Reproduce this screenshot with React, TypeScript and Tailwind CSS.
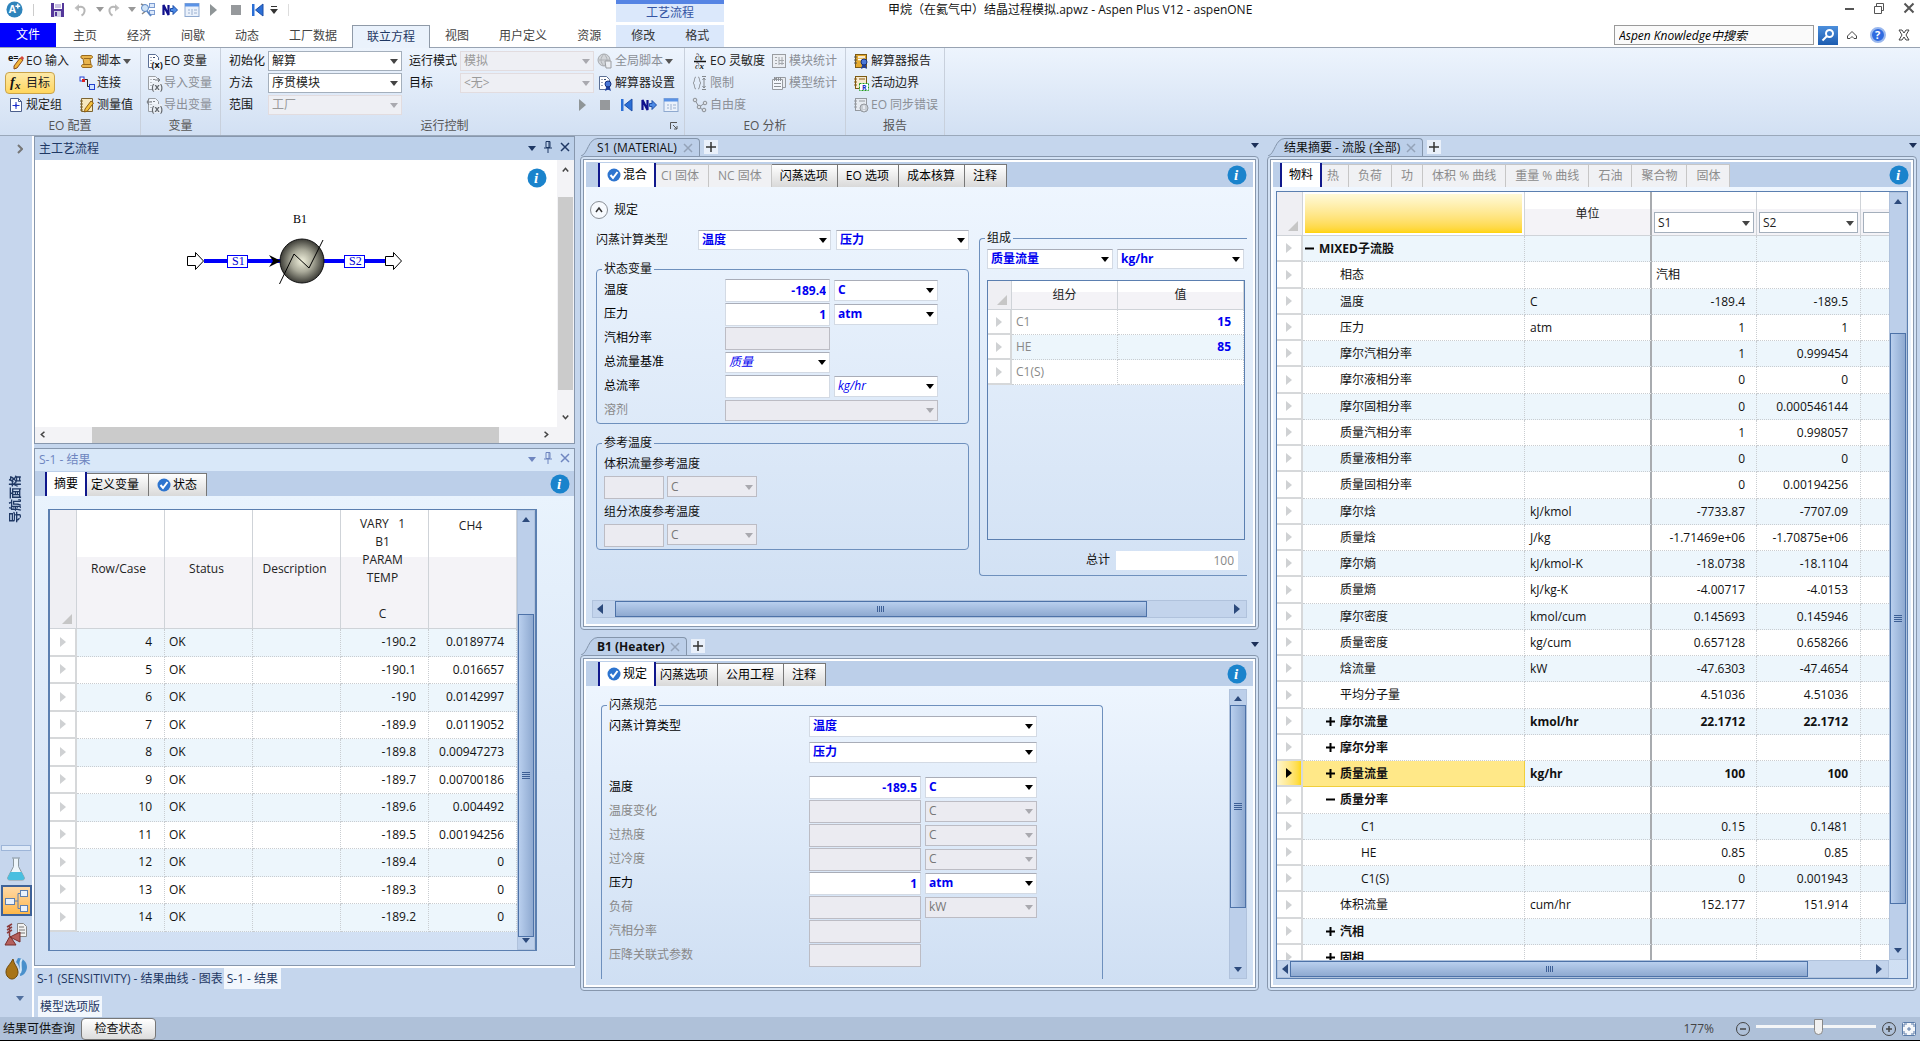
import React, { useId } from "react";

type Kids = { children?: React.ReactNode };

/* ---------- small drawings ---------- */

function Ico({ children, dim }: Kids & { dim?: boolean }) {
  return (
    <svg viewBox="0 0 16 16" className={dim ? "size-4 shrink-0 overflow-visible opacity-60 grayscale" : "size-4 shrink-0 overflow-visible"} fill="none" aria-hidden="true">
      {children}
    </svg>
  );
}

const Tri = ({ className = "" }: { className?: string }) => (
  <svg viewBox="0 0 8 5" className={"h-[5px] w-[8px] shrink-0 " + className} aria-hidden="true">
    <path d="M0 0h8L4 5z" fill="currentColor" />
  </svg>
);

const DocSheet = () => <path d="M2.5 1.5h7l3 3v10h-10z" fill="#fff" stroke="#5b6f95" />;
const Rows = () => <path d="M4.5 4.5h1M7 4.5h2M4.5 7.5h1M4.5 10.5h1" stroke="#3a4b70" />;

const IcoEo = () => (
  <Ico>
    <text x="0" y="8" fontSize="9" fontWeight="700" fill="#111" fontFamily="Open Sans">e=</text>
    <path d="M6 13l6-8 3 2-6 8-3 1z" fill="#f2b63c" stroke="#8a4b1a" />
    <path d="M12 5l3 2 1-2-2-2z" fill="#d8453a" />
  </Ico>
);
const IcoFx = () => (
  <Ico>
    <text x="2" y="12" fontSize="14" fontStyle="italic" fontWeight="700" fill="#111" fontFamily="Liberation Serif">f</text>
    <text x="7" y="14" fontSize="11" fontStyle="italic" fontWeight="700" fill="#111" fontFamily="Liberation Serif">x</text>
  </Ico>
);
const IcoSpec = () => (
  <Ico>
    <path d="M2.5 1.5h8l3 3v10h-11z" fill="#fff" stroke="#4c5f8c" />
    <path d="M13.5 4.5h-3v-3" stroke="#4c5f8c" />
    <path d="M8 5v7M4.5 8.5h7" stroke="#2233cc" />
    <path d="M8 7l1.5 1.5L8 10 6.500 8.500z" fill="#2233cc" />
  </Ico>
);
const IcoScript = () => (
  <Ico>
    <path d="M3 2.500h9c2 0 2 3 0 3h-1l1 6c1 0 2 3 0 3H4c-2 0-2-3 0-3h1l-1-6H3c-1.500 0-1.500-3 0-3z" fill="#e9b44c" stroke="#9a6a1c" />
    <path d="M5 5.500h7M5 11.500h7" stroke="#9a6a1c" />
  </Ico>
);
const IcoLink = () => (
  <Ico>
    <path d="M5 4.500h3.500v7H11" stroke="#222" />
    <rect x="1" y="2" width="4" height="4" fill="#fff" stroke="#2040d0" />
    <rect x="3" y="4" width="3" height="3" fill="#d22" />
    <rect x="10.500" y="9.500" width="5" height="5" fill="#cfe0ff" stroke="#2040d0" />
  </Ico>
);
const IcoMeasure = () => (
  <Ico>
    <path d="M2.500 1.500h11v13h-11z" fill="#f6e7bd" stroke="#7c6431" />
    <path d="M1 4h3M1 7h3M1 10h3M1 13h3" stroke="#7c6431" />
    <path d="M6 12l6-8 2.500 2-6 8-3 1z" fill="#f5c13a" stroke="#8a5a13" />
  </Ico>
);
const IcoVar = ({ dim, mark }: { dim?: boolean; mark?: "in" | "out" }) => (
  <Ico dim={dim}>
    <DocSheet />
    <Rows />
    <rect x="6" y="7" width="10" height="9" fill="#eef4fd" />
    <text x="5.500" y="14.500" fontSize="9" fontWeight="700" fill="#111" fontFamily="Open Sans">(x)</text>
    {mark === "in" && <path d="M9 5h5M12 3l2 2-2 2" stroke="#333" />}
    {mark === "out" && <path d="M1 5h5M3 2l-2 3 2 3" stroke="#333" />}
  </Ico>
);
const Rosette = () => (
  <g>
    <path d="M9.500 11l-1.500 5 3-1.500 3 1.500-1.500-5z" fill="#1f3f9c" />
    <circle cx="11" cy="9" r="3" fill="#4b78d8" stroke="#16307c" />
  </g>
);
const IcoGlobal = () => (
  <Ico dim>
    <circle cx="7" cy="7" r="6" fill="#c4c4c4" stroke="#777" />
    <path d="M2 7h10M7 1c-4 4-4 8 0 12M7 1c4 4 4 8 0 12" stroke="#888" />
    <path d="M8 8h6v7H9z" fill="#eee" stroke="#666" />
  </Ico>
);
const IcoSolver = () => (
  <Ico>
    <DocSheet />
    <Rows />
    <Rosette />
  </Ico>
);
const IcoPartial = () => (
  <Ico>
    <text x="3" y="7" fontSize="9" fontStyle="italic" fontWeight="700" fill="#111" fontFamily="Liberation Serif">∂y</text>
    <path d="M2 8.500h12" stroke="#111" strokeWidth="1.500" />
    <text x="3" y="16" fontSize="9" fontStyle="italic" fontWeight="700" fill="#111" fontFamily="Liberation Serif">∂x</text>
  </Ico>
);
const IcoLimit = () => (
  <Ico dim>
    <path d="M4 2c-2 0-1 5-3 6 2 1 1 6 3 6M6 2c2 0 1 5 3 6-2 1-1 6-3 6M12 3v10M10.500 5L12 3l1.500 2M10.500 11l1.500 2 1.500-2M10 1.500h4M10 14.500h4" stroke="#444" />
  </Ico>
);
const IcoTree = () => (
  <Ico dim>
    <path d="M3 3l4 7 6-4M7 10l4 3" stroke="#555" />
    <circle cx="3" cy="3" r="1.800" fill="#ddd" stroke="#555" />
    <circle cx="13" cy="6" r="1.800" fill="#ddd" stroke="#555" />
    <circle cx="12" cy="13" r="1.800" fill="#ddd" stroke="#555" />
    <circle cx="7" cy="10" r="1.800" fill="#ddd" stroke="#555" />
  </Ico>
);
const IcoStat = () => (
  <Ico dim>
    <rect x="1.500" y="1.500" width="13" height="13" fill="#eee" stroke="#666" />
    <path d="M4 4.500h2M4 7.500h2M4 10.500h2M8 4v8M11 4v8M8 7.500h5M8 10.500h5" stroke="#777" />
  </Ico>
);
const IcoStat2 = () => (
  <Ico dim>
    <path d="M4.500 2.500h10v10h-10z" fill="#eee" stroke="#666" />
    <path d="M1.500 4.500h10v10h-10z" fill="#fff" stroke="#666" />
    <path d="M3.500 2v4M5.500 2v4M7.500 2v4M9.500 2v4M3 8.500h7M3 11.500h7" stroke="#555" />
  </Ico>
);
const IcoReport = () => (
  <Ico>
    <rect x="2.500" y="1.500" width="11" height="13" fill="#e3a92f" stroke="#7c5a14" />
    <path d="M5 4h7M5 6.500h7" stroke="#fff" strokeWidth="1.500" />
    <path d="M1 4h3M1 7h3M1 10h3" stroke="#555" />
    <Rosette />
  </Ico>
);
const IcoBound = () => (
  <Ico>
    <rect x="2.500" y="1.500" width="11" height="12" fill="#f7ead0" stroke="#7c5a14" />
    <path d="M1 4h3M1 7h3M1 10h3M6 4h6" stroke="#8a5a13" />
    <rect x="6.500" y="8.500" width="9" height="7" fill="#fff" stroke="#1d9a1d" strokeDasharray="2 1" />
    <text x="9" y="15" fontSize="7" fontWeight="700" fill="#1430c8" fontFamily="Open Sans">R</text>
  </Ico>
);
const IcoSync = () => (
  <Ico dim>
    <rect x="2.500" y="1.500" width="11" height="12" fill="#eee" stroke="#666" />
    <path d="M1 4h3M1 7h3M1 10h3M6 4h6" stroke="#666" />
    <circle cx="11" cy="11" r="4" fill="#bbb" stroke="#666" />
    <path d="M11 8.500v3.500M11 13v1" stroke="#fff" strokeWidth="1.500" />
  </Ico>
);
const IcoSave = () => (
  <Ico>
    <path d="M1 1h13v14H1z" fill="#54379a" />
    <rect x="4" y="1" width="8" height="6" fill="#fff" />
    <path d="M5 3h6M5 5h6" stroke="#8f7fc4" />
    <rect x="4" y="9" width="7" height="6" fill="#cfcfe6" />
    <rect x="5" y="10" width="2" height="4" fill="#54379a" />
  </Ico>
);
const IcoUndo = () => (
  <Ico dim>
    <path d="M7 2L2.500 6 7 9.500z" fill="#999" />
    <path d="M5 6c5-3 9 0 7 5-.5 1.500-1.500 2-2.500 2.500" stroke="#888" strokeWidth="2" />
  </Ico>
);
const IcoRedo = () => (
  <Ico dim>
    <path d="M9 2l4.500 4L9 9.500z" fill="#999" />
    <path d="M11 6C6 3 2 6 4 11c.5 1.500 1.500 2 2.500 2.500" stroke="#888" strokeWidth="2" />
  </Ico>
);
const IcoFlow = () => (
  <Ico>
    <path d="M1 2l6 3M2 12l5-4" stroke="#888" strokeWidth="1.500" />
    <rect x="9.500" y="1.500" width="5" height="4" fill="#dce9fb" stroke="#7b9bd0" />
    <rect x="9.500" y="8.500" width="5" height="4" fill="#dce9fb" stroke="#7b9bd0" />
    <circle cx="5" cy="6" r="3.500" fill="#cfe3f7" stroke="#5a86c4" />
    <path d="M7 9l4 5" stroke="#5a86c4" strokeWidth="2" />
  </Ico>
);
const IcoNext = () => (
  <Ico>
    <path d="M1.500 13V3l5 10V3" stroke="#10108c" strokeWidth="2.200" />
    <path d="M8.500 6.500H11v-3L15.500 8 11 12.500v-3H8.500z" fill="#4c8ae6" stroke="#1c4ea8" />
  </Ico>
);
const IcoPanel = () => (
  <Ico>
    <rect x="1" y="1.500" width="14" height="13" fill="#eaf1fb" stroke="#8fa9cf" />
    <path d="M1 1.500h14v3H1z" fill="#5b93e6" />
    <path d="M4 8h2M8 7v6M10 8h3M4 11h2M10 11h3" stroke="#9bb0cf" />
  </Ico>
);
const IcoPlay = () => (
  <Ico>
    <path d="M4 2l7 6-7 6z" fill="#8f9597" />
  </Ico>
);
const IcoStop = () => (
  <Ico>
    <rect x="3" y="3" width="10" height="10" fill="#96999c" />
  </Ico>
);
const IcoFirst = () => (
  <Ico>
    <path d="M2 2h2.500v12H2z" fill="#2b6fd6" />
    <path d="M13 2v12L5.500 8z" fill="#2b6fd6" stroke="#1c4ea8" />
  </Ico>
);
const Check = () => (
  <svg viewBox="0 0 14 14" className="size-3.5 shrink-0" aria-hidden="true">
    <circle cx="7" cy="7" r="6.500" fill="#2d74cf" />
    <path d="M3.500 7l2.500 3 4.500-6" fill="none" stroke="#fff" strokeWidth="2" />
  </svg>
);
const Info = () => (
  <button type="button" aria-label="信息" className="size-5 shrink-0">
    <svg viewBox="0 0 20 20" className="size-5" aria-hidden="true">
      <circle cx="10" cy="10" r="9.500" fill="#1a83cc" />
      <text x="7" y="15" fontSize="15" fontStyle="italic" fontWeight="700" fill="#fff" fontFamily="Liberation Serif">i</text>
    </svg>
  </button>
);

/* ---------- controls ---------- */

type SelProps = { id?: string; label?: string; value?: string; look?: "blue" | "italic" | "plain" | "off" | "faint"; className?: string };

function Sel({ id, label, value = "", look = "blue", className = "" }: SelProps) {
  const looks = {
    blue: "border-[#d3dae4] border-t-[#a9adb8] bg-white font-bold text-[#0000f0]",
    italic: "border-[#d3dae4] border-t-[#a9adb8] bg-white italic text-[#0000f0]",
    plain: "border-[#a4afbc] bg-white text-[#222]",
    off: "border-[#bcbcc4] bg-[#ebebf1] text-[#777]",
    faint: "border-[#e2dcdf] bg-[#eeeff4] text-[#9a9a9a]",
  };
  const off = look === "off" || look === "faint";
  return (
    <span className={"relative block shrink-0 " + className}>
      <select
        id={id}
        aria-label={label}
        defaultValue={value}
        disabled={off}
        className={"block h-full w-full appearance-none rounded-none border pr-4 pl-[3px] leading-4 opacity-100 outline-none " + looks[look]}
      >
        <option>{value}</option>
      </select>
      <Tri className={"pointer-events-none absolute top-1/2 right-1 -mt-0.5 w-[7px] " + (off ? "text-[#a9a9af]" : look === "plain" ? "text-[#444]" : "text-black")} />
    </span>
  );
}

function Box({ id, value = "", off, className = "" }: { id?: string; value?: string; off?: boolean; className?: string }) {
  return (
    <input
      id={id}
      defaultValue={value}
      disabled={off}
      className={
        "h-[23px] shrink-0 border px-[3px] text-right font-bold text-[#0000f0] outline-none " +
        (off ? "border-[#bcbcc4] bg-[#ebebf1] " : "border-[#d3dae4] border-t-[#a9adb8] bg-white ") +
        className
      }
    />
  );
}

function RBtn({ icon, children, dim, on, arrow }: Kids & { icon: React.ReactNode; dim?: boolean; on?: boolean; arrow?: boolean }) {
  return (
    <button
      type="button"
      disabled={dim}
      className={
        "flex h-[22px] items-center gap-0.5 self-start rounded-sm border px-[2px] whitespace-nowrap " +
        (on ? "border-[#c9a34a] bg-gradient-to-b from-[#fde9a6] to-[#ffd65c] pr-[4px] " : "border-transparent ") +
        (dim ? "text-[#8b8f96]" : "text-[#222]")
      }
    >
      {icon}
      {children}
      {arrow && <Tri className="h-1 w-1.5 text-[#555]" />}
    </button>
  );
}

function Group({ name, className = "", nameClass = "", children, launcher }: Kids & { name: string; className?: string; nameClass?: string; launcher?: boolean }) {
  return (
    <section aria-label={name} className={"flex shrink-0 flex-col border-r border-[#c8d0dc] pt-[2px] " + className}>
      <div className="flex h-[66px]">{children}</div>
      <div className={"relative flex-1 text-center leading-[19px] text-[#555] " + nameClass}>
        {name}
        {launcher && (
          <svg viewBox="0 0 8 8" className="absolute top-1.5 right-1.5 size-2" fill="none" stroke="#555" aria-hidden="true">
            <path d="M.5 7V.5H7M3 3l4 4M7 4v3H4" />
          </svg>
        )}
      </div>
    </section>
  );
}

type Tab = { t: string; s?: "on" | "ok" | "off"; check?: boolean };

function FormTabs({ tabs, className = "", infoClass = "mr-[6px]" }: { tabs: Tab[]; className?: string; infoClass?: string }) {
  return (
    <div className={"flex h-[25px] shrink-0 items-end bg-[#bccfe9] pt-px " + className}>
      {tabs.map(({ t, s = "ok", check }) => (
        <button
          key={t}
          type="button"
          disabled={s === "off"}
          className={
            "flex items-center gap-0.5 whitespace-nowrap " +
            (s === "on"
              ? "relative z-10 -mr-1 h-6 border-x-2 border-[#10188c] bg-white px-[7px] text-black"
              : s === "ok"
                ? "h-[23px] border border-b-0 border-l-0 border-[#777] bg-gradient-to-b from-white to-[#d9d9d9] pr-[9px] pl-2 text-black"
                : "h-[23px] border border-b-0 border-l-0 border-[#c6c6c6] bg-[#f0f1f4] px-[9px] text-[#8c8c8c]")
          }
        >
          {check && <Check />}
          {t}
        </button>
      ))}
      <span className={"ml-auto flex h-full items-center " + infoClass}>
        <Info />
      </span>
    </div>
  );
}

function HBar({ a, b, c }: { a: number; b: number; c: number }) {
  return (
    <div className="flex h-[18px] min-w-0 flex-1 items-center border border-[#b0c2dc] bg-[#c3d4ec] text-[#2c4a7c]">
      <svg viewBox="0 0 6 10" className="ml-1 h-2.5 w-1.5 shrink-0" aria-hidden="true"><path d="M6 0v10L0 5z" fill="currentColor" /></svg>
      <span style={{ flexGrow: a }} />
      <span style={{ flexGrow: b }} className="flex h-4 items-center justify-center gap-px border border-[#4d72a8] bg-gradient-to-b from-[#b9cfee] to-[#8ea9d0]">
        {[0, 1, 2, 3].map((i) => <i key={i} className="h-1.5 w-px bg-[#3d5f96]" />)}
      </span>
      <span style={{ flexGrow: c }} />
      <svg viewBox="0 0 6 10" className="mr-1.5 h-2.5 w-1.5 shrink-0" aria-hidden="true"><path d="M0 0v10l6-5z" fill="currentColor" /></svg>
    </div>
  );
}

function VBar({ a, b, c, className = "" }: { a: number; b: number; c: number; className?: string }) {
  return (
    <div className={"flex w-[18px] shrink-0 flex-col items-center border border-[#b0c2dc] bg-[#bccfea] text-[#2c4a7c] " + className}>
      <Tri className="mt-1.5 w-2.5 rotate-180" />
      <span style={{ flexGrow: a }} />
      <span style={{ flexGrow: b }} className="flex w-4 flex-col items-center justify-center gap-px border border-[#4d72a8] bg-gradient-to-r from-[#b9cfee] to-[#8ea9d0]">
        {[0, 1, 2, 3].map((i) => <i key={i} className="h-px w-2 bg-[#3d5f96]" />)}
      </span>
      <span style={{ flexGrow: c }} />
      <Tri className="mb-1.5 w-2.5" />
    </div>
  );
}

function DocFrame({ title, bold, children, grow }: Kids & { title: string; bold?: boolean; grow: number }) {
  return (
    <section aria-label={title} className="flex min-h-0 basis-0 flex-col" style={{ flexGrow: grow }}>
      <div className="flex h-5 shrink-0 items-end text-[#111]">
        <svg viewBox="0 0 18 18" className="-mr-px h-[18px] w-[18px] shrink-0" aria-hidden="true">
          <path d="M1 18C8 16 8 .5 18 .5V18z" fill="#bccfe9" />
          <path d="M1 18C8 16 8 .5 18 .5" fill="none" stroke="#8495ab" />
        </svg>
        <div className="flex h-[18px] items-center gap-1.5 rounded-tr border-t border-r border-[#8495ab] bg-[#bccfe9] pr-1.5">
          <span className={bold ? "font-bold whitespace-nowrap" : "whitespace-nowrap"}>{title}</span>
          <button type="button" aria-label="关闭标签" className="text-[#94a3b8]">
            <svg viewBox="0 0 10 10" className="size-2.5" stroke="currentColor" strokeWidth="1.500" aria-hidden="true"><path d="M1 1l8 8M9 1l-8 8" /></svg>
          </button>
        </div>
        <button type="button" aria-label="新建标签" className="mb-0.5 ml-1 flex size-3.5 items-center justify-center bg-[#e9f0fa]">
          <svg viewBox="0 0 12 12" className="size-3" stroke="#333" strokeWidth="1.500" aria-hidden="true"><path d="M6 1v10M1 6h10" /></svg>
        </button>
        <button type="button" aria-label="标签列表" className="mb-2 ml-auto text-[#1b2f58]"><Tri /></button>
      </div>
      <div className="flex min-h-0 flex-1 rounded-sm border border-[#8797ad] bg-[#d3e2f5] p-0.5">
        <div className="flex min-h-0 min-w-0 flex-1 border border-[#8797ad] bg-white p-0.5">
          <div className="flex min-h-0 min-w-0 flex-1 flex-col bg-gradient-to-b from-[#f0f7ff] to-[#cfdff3]">{children}</div>
        </div>
      </div>
    </section>
  );
}

function PanelTitle({ text, faded }: { text: string; faded?: boolean }) {
  return (
    <div className={"flex shrink-0 items-center pr-1 pl-1 " + (faded ? "h-[22px] bg-[#d9e8f9] text-[#6f86c0]" : "h-[23px] bg-[#bcd0ea] text-[#1f3864]")}>
      <h2 className="flex-1">{text}</h2>
      <button type="button" aria-label="选项" className="mr-2"><Tri /></button>
      <button type="button" aria-label="固定" className="mr-2">
        <svg viewBox="0 0 8 12" className="mb-1 h-3 w-2" fill="none" stroke="currentColor" aria-hidden="true"><path d="M2 .5h4v6H2zM0 7h8M4 7v5M5 1v5" /></svg>
      </button>
      <button type="button" aria-label="关闭" className="mb-1">
        <svg viewBox="0 0 10 10" className="size-2.5" stroke="currentColor" strokeWidth="1.500" aria-hidden="true"><path d="M1 1l8 8M9 1l-8 8" /></svg>
      </button>
    </div>
  );
}

const RowHead = ({ on }: { on?: boolean }) => (
  <th className={"border-2 border-t-0 border-l-0 border-[#d6d8da] p-0 " + (on ? "bg-gradient-to-r from-[#fff6cc] to-[#ffd800]" : "bg-white")}>
    <svg viewBox="0 0 6 10" className="mx-auto h-2.5 w-1.5" aria-hidden="true"><path d="M0 0l6 5-6 5z" fill={on ? "#000" : "#cfd1d3"} /></svg>
  </th>
);
const Corner = () => (
  <th aria-label="全选" className="border-r border-b border-[#cfd3d8] bg-[#efeff3] p-0 align-bottom">
    <svg viewBox="0 0 10 10" className="mr-1 mb-1 ml-auto size-2.5" aria-hidden="true"><path d="M10 0v10H0z" fill="#c6c6c6" /></svg>
  </th>
);

/* ---------- ribbon ---------- */

function TitleArea() {
  const tabs = ["主页", "经济", "间歇", "动态", "工厂数据", "联立方程", "视图", "用户定义", "资源"];
  return (
    <header className="shrink-0 bg-white">
      <div className="flex h-[25px]">
        <div className="flex w-[616px] shrink-0 items-center pb-1.5 pl-[6px]">
          <svg viewBox="0 0 18 18" className="size-[17px]" aria-label="Aspen Plus" role="img">
            <circle cx="9" cy="9" r="8.500" fill="#2f84bb" />
            <text x="3" y="13" fontSize="11" fontWeight="700" fill="#fff" fontFamily="Open Sans">A</text>
            <path d="M12.500 3v5M10 5.500h5" stroke="#fff" strokeWidth="1.500" />
          </svg>
          <i className="mr-4 ml-2.5 h-3 w-px bg-[#ccc]" />
          <button type="button" aria-label="保存"><IcoSave /></button>
          <button type="button" aria-label="撤消" className="ml-1.5"><IcoUndo /></button>
          <Tri className="mr-0.5 ml-2 h-1 w-1.5 text-[#999]" />
          <button type="button" aria-label="恢复"><IcoRedo /></button>
          <Tri className="mr-1 ml-1.5 h-1 w-1.5 text-[#999]" />
          <span className="flex gap-1.5">
            <button type="button" aria-label="查找"><IcoFlow /></button>
            <button type="button" aria-label="下一步"><IcoNext /></button>
            <button type="button" aria-label="控制面板"><IcoPanel /></button>
            <button type="button" aria-label="运行"><IcoPlay /></button>
            <button type="button" aria-label="停止"><IcoStop /></button>
            <button type="button" aria-label="重置"><IcoFirst /></button>
          </span>
          <span className="ml-1 flex flex-col items-center gap-0.5 text-[#333]"><i className="h-px w-1.5 bg-[#333]" /><Tri className="h-1 w-1.5" /></span>
          <i className="ml-2.5 h-3 w-px bg-[#ddd]" />
        </div>
        <div className="mb-[3px] w-[108px] shrink-0 border-t-4 border-[#5584e4] bg-[#dbe8fb] text-center leading-[17px] text-[#3455a4]">工艺流程</div>
        <h1 className="min-w-0 flex-1 truncate pl-41 leading-5 text-[#111]">甲烷（在氦气中）结晶过程模拟.apwz - Aspen Plus V12 - aspenONE</h1>
        <div className="flex items-start gap-[18px] pt-0.5 pr-[5px] text-[#555]">
          <button type="button" aria-label="最小化"><svg viewBox="0 0 12 12" className="size-3" stroke="currentColor" strokeWidth="2" aria-hidden="true"><path d="M2 7h9" /></svg></button>
          <button type="button" aria-label="还原"><svg viewBox="0 0 12 12" className="size-3" fill="none" stroke="currentColor" aria-hidden="true"><path d="M1.500 4.500h7v7h-7zM3.500 4V1.500h7v7H9" /></svg></button>
          <button type="button" aria-label="关闭窗口"><svg viewBox="0 0 12 12" className="size-3" stroke="currentColor" strokeWidth="2" aria-hidden="true"><path d="M1.500 1.500l9 9M10.500 1.500l-9 9" /></svg></button>
        </div>
      </div>
      <div className="flex h-[23px] items-stretch border-b border-[#98a3b2]">
        <button type="button" className="-mt-0.5 mr-0.5 w-14 bg-[#0000fe] text-white">文件</button>
        {tabs.map((t) => (
          <button
            key={t}
            type="button"
            className={
              "whitespace-nowrap " +
              (t === "联立方程" ? "-mb-px border border-b-0 border-[#8f9aa8] bg-[#eaf2fc] px-[14px] text-[#1f3864]" : "px-[15px] text-[#444]")
            }
          >
            {t}
          </button>
        ))}
        <div className="flex bg-[#dbe8fb] text-[#333]">
          <button type="button" className="px-[15px]">修改</button>
          <button type="button" className="px-[15px]">格式</button>
        </div>
        <div className="ml-auto flex items-center gap-1 pr-2.5 pb-0.5">
          <input aria-label="搜索" defaultValue="Aspen Knowledge中搜索" className="h-5 w-[200px] border border-[#9a9a9a] bg-[#fafafa] px-1 text-black italic outline-none" />
          <button type="button" aria-label="开始搜索" className="flex h-[19px] w-5 items-center justify-center bg-gradient-to-b from-[#4c8fdc] to-[#1c5cb0]">
            <svg viewBox="0 0 14 14" className="size-3.5" fill="none" stroke="#fff" strokeWidth="2" aria-hidden="true"><circle cx="8.500" cy="5.500" r="3.500" /><path d="M6 8l-4.500 4.500" /></svg>
          </button>
          <button type="button" aria-label="折叠功能区" className="ml-1">
            <svg viewBox="0 0 12 12" className="size-3" fill="#fff" stroke="#444" aria-hidden="true"><path d="M1.500 9.500V7L6 2.500 10.500 7v2.500H8L6 7.500 4 9.500z" /></svg>
          </button>
          <button type="button" aria-label="帮助" className="ml-2">
            <svg viewBox="0 0 16 16" className="size-4" aria-hidden="true"><circle cx="8" cy="8" r="7" fill="#2f6be0" stroke="#9ab8ee" strokeWidth="2" /><text x="5" y="12" fontSize="11" fontWeight="700" fill="#fff" fontFamily="Open Sans">?</text></svg>
          </button>
          <button type="button" aria-label="关闭文档" className="ml-2">
            <svg viewBox="0 0 12 12" className="size-3" fill="#fff" stroke="#444" aria-hidden="true"><path d="M1 1h3l2 3 2-3h3L8 6l3 5H8L6 8l-2 3H1l3-5z" /></svg>
          </button>
        </div>
      </div>
    </header>
  );
}

function RibbonBar() {
  const id = useId();
  return (
    <div className="flex h-[88px] shrink-0 border-b border-[#9aa8ba] bg-gradient-to-b from-[#edf4fd] to-[#d2e0f3]">
      <Group name="EO 配置" className="w-[141px]">
        <div className="ml-[5px] flex w-[71px] flex-col">
          <RBtn icon={<IcoEo />}>EO 输入</RBtn>
          <RBtn icon={<IcoFx />} on>目标</RBtn>
          <RBtn icon={<IcoSpec />}>规定组</RBtn>
        </div>
        <div className="flex flex-col">
          <RBtn icon={<IcoScript />} arrow>脚本</RBtn>
          <RBtn icon={<IcoLink />}>连接</RBtn>
          <RBtn icon={<IcoMeasure />}>测量值</RBtn>
        </div>
      </Group>
      <Group name="变量" className="w-[80px]">
        <div className="ml-0.5 flex flex-col">
          <RBtn icon={<IcoVar />}>EO 变量</RBtn>
          <RBtn icon={<IcoVar dim mark="in" />} dim>导入变量</RBtn>
          <RBtn icon={<IcoVar dim mark="out" />} dim>导出变量</RBtn>
        </div>
      </Group>
      <Group name="运行控制" className="w-[464px]" nameClass="pr-4" launcher>
        <div className="flex flex-col pl-2">
          <div className="flex h-[22px] items-center">
            <label htmlFor={id + "a"} className="w-[39px]">初始化</label>
            <Sel id={id + "a"} value="解算" look="plain" className="h-5 w-[134px]" />
            <label htmlFor={id + "b"} className="ml-[7px] w-[51px]">运行模式</label>
            <Sel id={id + "b"} value="模拟" look="faint" className="h-5 w-[134px]" />
            <RBtn icon={<IcoGlobal />} dim arrow>全局脚本</RBtn>
          </div>
          <div className="flex h-[22px] items-center">
            <label htmlFor={id + "c"} className="w-[39px]">方法</label>
            <Sel id={id + "c"} value="序贯模块" look="plain" className="h-5 w-[134px]" />
            <label htmlFor={id + "d"} className="ml-[7px] w-[51px]">目标</label>
            <Sel id={id + "d"} value="<无>" look="faint" className="h-5 w-[134px]" />
            <RBtn icon={<IcoSolver />}>解算器设置</RBtn>
          </div>
          <div className="flex h-[22px] items-center">
            <label htmlFor={id + "e"} className="w-[39px]">范围</label>
            <Sel id={id + "e"} value="工厂" look="faint" className="h-5 w-[134px]" />
            <span className="ml-[173px] flex gap-1.5">
              <button type="button" aria-label="运行"><IcoPlay /></button>
              <button type="button" aria-label="停止"><IcoStop /></button>
              <button type="button" aria-label="重置"><IcoFirst /></button>
              <button type="button" aria-label="下一步"><IcoNext /></button>
              <button type="button" aria-label="控制面板"><IcoPanel /></button>
            </span>
          </div>
        </div>
      </Group>
      <Group name="EO 分析" className="w-[161px]">
        <div className="ml-[4px] flex w-[79px] flex-col">
          <RBtn icon={<IcoPartial />}>EO 灵敏度</RBtn>
          <RBtn icon={<IcoLimit />} dim>限制</RBtn>
          <RBtn icon={<IcoTree />} dim>自由度</RBtn>
        </div>
        <div className="flex flex-col">
          <RBtn icon={<IcoStat />} dim>模块统计</RBtn>
          <RBtn icon={<IcoStat2 />} dim>模型统计</RBtn>
        </div>
      </Group>
      <Group name="报告" className="w-[99px]">
        <div className="ml-[4px] flex flex-col">
          <RBtn icon={<IcoReport />}>解算器报告</RBtn>
          <RBtn icon={<IcoBound />}>活动边界</RBtn>
          <RBtn icon={<IcoSync />} dim>EO 同步错误</RBtn>
        </div>
      </Group>
    </div>
  );
}

/* ---------- left side ---------- */

function NavStrip() {
  return (
    <nav aria-label="导航" className="flex w-[34px] shrink-0 flex-col items-center border-r-2 border-white bg-[#c6d6ed]">
      <button type="button" aria-label="展开" className="mt-2 ml-2">
        <svg viewBox="0 0 6 10" className="h-2.5 w-1.5" fill="none" stroke="#777" strokeWidth="2" aria-hidden="true"><path d="M1 1l4 4-4 4" /></svg>
      </button>
      <div className="flex flex-1 items-center">
        <span className="rotate-180 font-bold text-[#1f3864] [text-orientation:sideways] [writing-mode:vertical-rl]">导航面格</span>
      </div>
      <i className="h-1.5 w-[30px] border border-[#9db5d8] bg-[#dfeaf8]" />
      <button type="button" aria-label="物性" className="mt-1.5">
        <svg viewBox="0 0 24 24" className="size-6" aria-hidden="true">
          <path d="M8 1h8M9.500 1.500v8L4 20c-1 2 0 3 2 3h12c2 0 3-1 2-3L14.500 9.500v-8" fill="#eef6fb" stroke="#8a979e" />
          <path d="M6.500 15h11l2.500 5c1 2 0 3-2 3H6c-2 0-3-1-2-3z" fill="#49bfe0" />
        </svg>
      </button>
      <button type="button" aria-label="模拟" className="mt-1 flex size-[31px] items-center justify-center border-2 border-[#3f6298] bg-gradient-to-b from-[#ffd8a4] to-[#ffb847]">
        <svg viewBox="0 0 26 26" className="size-[26px]" fill="#eaf2fd" stroke="#5d7fb0" aria-hidden="true">
          <path d="M11 13h4M19 5.500h-4v15h4" fill="none" />
          <rect x="2.500" y="10.500" width="9" height="6" /><rect x="17.500" y="2.500" width="7" height="6" /><rect x="17.500" y="17.500" width="7" height="6" />
        </svg>
      </button>
      <button type="button" aria-label="安全性分析" className="mt-1.5">
        <svg viewBox="0 0 24 24" className="size-6" aria-hidden="true">
          <path d="M13.500 1.500h6l3 3v10h-9z" fill="#f2f2f2" stroke="#888" />
          <path d="M15 5h5M15 8h6M15 11h6" stroke="#777" />
          <path d="M3 5l5-3M3 8l5-3M3 11l5-3M5.500 3v11" stroke="#8b3b3b" strokeWidth="1.500" />
          <path d="M6 14l-5 9h11zM6 15l10-5v10z" fill="#b5605c" stroke="#7a2f2c" />
        </svg>
      </button>
      <button type="button" aria-label="能量分析" className="mt-2.5">
        <svg viewBox="0 0 24 24" className="size-6" aria-hidden="true">
          <path d="M9 3c-3 6-7 8-7 13 0 4 3 7 6 7s6-3 6-7c0-5-4-7-5-13z" fill="#a87418" stroke="#6e4a0c" />
          <path d="M14 2c5 0 9 4 9 9s-4 9-7 9c1-6-1-11-4-14z" fill="#4a90cb" />
          <path d="M18 3c-4 5 1 7-2 14" fill="none" stroke="#d6e8f7" strokeWidth="2" />
        </svg>
      </button>
      <Tri className="mt-4 mb-4 ml-2 h-1 w-1.5 text-[#51709f]" />
    </nav>
  );
}

function Flowsheet() {
  return (
    <svg viewBox="0 0 522 268" className="h-full w-full" preserveAspectRatio="xMinYMin slice" role="img" aria-label="工艺流程图">
      <defs>
        <radialGradient id="ball">
          <stop offset="0" stopColor="#f0f0dc" /><stop offset=".5" stopColor="#a9a999" /><stop offset="1" stopColor="#3c3c36" />
        </radialGradient>
      </defs>
      <path d="M169 101h185" stroke="#0000fa" strokeWidth="4" />
      <g fill="#fff" stroke="#000">
        <path d="M152.500 96.500h8v-4l8 8.500-8 8.500v-4h-8zM350.500 96.500h8v-4l8 8.500-8 8.500v-4h-8z" />
      </g>
      <path d="M234 95l12 6-12 6 4-6z" fill="#000" />
      <circle cx="267" cy="101" r="22" fill="url(#ball)" stroke="#111" />
      <path d="M244.500 124L259 94l15 14 14-28" fill="none" stroke="#000" />
      <g fill="#fff" stroke="#0000fa">
        <rect x="192.500" y="95.500" width="20" height="12" /><rect x="309.500" y="95.500" width="20" height="12" />
      </g>
      <g className="font-['Liberation_Serif',serif] text-[12px]">
        <text x="197" y="105" fill="#0000d0">S1</text>
        <text x="314" y="105" fill="#0000d0">S2</text>
        <text x="258" y="63" fill="#000">B1</text>
      </g>
    </svg>
  );
}

const chev = "size-[7px] shrink-0";

const sens: [number, string, string][] = [
  [4, "-190.2", "0.0189774"], [5, "-190.1", "0.016657"], [6, "-190", "0.0142997"], [7, "-189.9", "0.0119052"],
  [8, "-189.8", "0.00947273"], [9, "-189.7", "0.00700186"], [10, "-189.6", "0.004492"], [11, "-189.5", "0.00194256"],
  [12, "-189.4", "0"], [13, "-189.3", "0"], [14, "-189.2", "0"],
];

const headCell = "border-r border-b border-[#cfd3d8] bg-[linear-gradient(#fff_40%,#f4f3f7_40%)] p-0 font-normal text-[#222]";
const cell = "border-r border-b border-dotted border-[#c9cdd1] py-0";

function LeftColumn() {
  return (
    <div className="flex min-h-0 min-w-0 flex-col">
      <section aria-label="主工艺流程" className="flex min-h-0 grow-[307] basis-0 flex-col border border-[#8797ad] bg-white">
        <PanelTitle text="主工艺流程" />
        <div className="flex min-h-0 flex-1">
          <div className="relative min-w-0 flex-1">
            <div className="absolute inset-0"><Flowsheet /></div>
            <div className="absolute top-2 right-2.5"><Info /></div>
          </div>
          <div className="flex w-[17px] flex-col items-center bg-[#f3f3f6] py-1.5">
            <svg viewBox="0 0 9 9" className={chev} fill="none" stroke="#444" strokeWidth="2" aria-hidden="true"><path d="M1 7l3.500-4L8 7" /></svg>
            <span className="mt-[24px] mb-[24px] w-[15px] flex-1 bg-[#cbcbcb]" />
            <svg viewBox="0 0 9 9" className={chev} fill="none" stroke="#444" strokeWidth="2" aria-hidden="true"><path d="M1 2l3.500 4L8 2" /></svg>
          </div>
        </div>
        <div className="flex h-[16px] shrink-0 items-center bg-[#f3f3f6] pr-6 pl-1">
          <svg viewBox="0 0 9 9" className={chev} fill="none" stroke="#444" strokeWidth="2" aria-hidden="true"><path d="M7 1L3 4.500 7 8" /></svg>
          <span className="mr-[44px] ml-[46px] h-full flex-1 bg-[#cbcbcb]" />
          <svg viewBox="0 0 9 9" className={chev} fill="none" stroke="#444" strokeWidth="2" aria-hidden="true"><path d="M2 1l4 3.500L2 8" /></svg>
        </div>
      </section>
      <section aria-label="S-1 - 结果" className="mt-1 flex min-h-0 grow-[519] basis-0 flex-col border border-[#8797ad] bg-[#d9e7f8]">
        <PanelTitle text="S-1 - 结果" faded />
        <FormTabs className="pl-2.5" infoClass="mr-1" tabs={[{ t: "摘要", s: "on" }, { t: "定义变量" }, { t: "状态", check: true }]} />
        <div className="flex min-h-0 flex-1 bg-gradient-to-b from-[#e9f3fd] to-[#d0dff3] px-[13px] pt-[13px] pb-[14px]">
          <div className="mr-[24px] flex min-w-0 flex-1 border-2 border-t border-b border-[#5b7fb0]">
            <div className="min-w-0 flex-1 overflow-hidden">
              <table className="w-full table-fixed border-separate border-spacing-0">
                <colgroup><col className="w-[27px]" /><col /><col /><col /><col /><col /></colgroup>
                <thead>
                  <tr className="h-[119px]">
                    <Corner />
                    <th className={headCell + " pr-1"}>Row/Case</th>
                    <th className={headCell + " pr-1"}>Status</th>
                    <th className={headCell + " pr-1"}>Description</th>
                    <th className={headCell + " pr-1 leading-[18px] whitespace-pre"}>{"VARY   1\nB1\nPARAM\nTEMP\n\nC"}</th>
                    <th className={headCell + " pt-[7px] pr-1 align-top leading-[18px]"}>CH4</th>
                  </tr>
                </thead>
                <tbody>
                  {sens.map(([n, t, v], i) => (
                    <tr key={n} className={i % 2 ? "h-[27px] bg-white" : "h-7 bg-[#edf6fc]"}>
                      <RowHead />
                      <td className={cell + " pr-3 text-right"}>{n}</td>
                      <td className={cell + " pl-1"}>OK</td>
                      <td className={cell} />
                      <td className={cell + " pr-3 text-right"}>{t}</td>
                      <td className={cell + " pr-3 text-right"}>{v}</td>
                    </tr>
                  ))}
                </tbody>
              </table>
            </div>
            <VBar a={91} b={310} c={1} />
          </div>
        </div>
      </section>
      <div className="flex h-[23px] shrink-0 items-stretch border-t-2 border-white pl-[3px] text-[#1f3864]">
        <button type="button">S-1 (SENSITIVITY) - 结果曲线 - 图表</button>
        <button type="button" className="ml-px bg-[#f2f7fd] px-[3px]">S-1 - 结果</button>
      </div>
      <div className="flex h-[28px] shrink-0 items-end pl-1 text-[#1f3864]">
        <button type="button" className="h-[21px] bg-[#f2f7fd] px-0.5">模型选项版</button>
      </div>
    </div>
  );
}

/* ---------- stream form ---------- */

const legend = "-ml-0.5 h-[18px] px-0.5 leading-[18px]";
const fieldset = "min-w-0 rounded border border-[#6e90bd] pl-[7px]";

function Line({ label, off, w = "w-[121px]", children }: { label: string; off?: boolean; w?: string; children: (id: string) => React.ReactNode }) {
  const id = useId();
  return (
    <div className="flex h-6 items-center gap-1">
      <label htmlFor={id} className={w + " -mr-1 shrink-0 whitespace-nowrap " + (off ? "text-[#888]" : "text-black")}>{label}</label>
      {children(id)}
    </div>
  );
}

function StreamForm() {
  const comps = [["C1", "15"], ["HE", "85"], ["C1(S)", ""]];
  const ids = useId();
  return (
    <>
      <FormTabs
        className="pl-[12px]"
        tabs={[{ t: "混合", s: "on", check: true }, { t: "CI 固体", s: "off" }, { t: "NC 固体", s: "off" }, { t: "闪蒸选项" }, { t: "EO 选项" }, { t: "成本核算" }, { t: "注释" }]}
      />
      <div className="flex min-h-0 flex-1 flex-col pr-[6px] pb-[6px] pl-[10px]">
        <div className="-ml-[6px] flex h-[42px] shrink-0 items-center gap-[6px] pt-[4px]">
          <button type="button" aria-label="折叠规定">
            <svg viewBox="0 0 18 18" className="size-[18px]" fill="#f7fafe" stroke="#8a8f96" aria-hidden="true"><circle cx="9" cy="9" r="8.500" /><path d="M6 11l3-4 3 4" fill="none" stroke="#333" strokeWidth="1.500" /></svg>
          </button>
          <span>规定</span>
        </div>
        <div className="flex min-w-0 items-start gap-[10px]">
          <div className="w-[373px] shrink-0">
            <div className="flex h-[22px] items-center">
              <label htmlFor={ids + "t"} className="w-[102px]">闪蒸计算类型</label>
              <Sel id={ids + "t"} value="温度" className="h-5 w-[133px]" />
              <Sel label="第二闪蒸变量" value="压力" className="ml-[5px] h-5 w-[133px]" />
            </div>
            <fieldset className={fieldset + " mt-[9px] pb-px"}>
              <legend className={legend}>状态变量</legend>
              <Line label="温度">{(id) => <><Box id={id} value="-189.4" className="w-[105px]" /><Sel label="温度单位" value="C" className="h-[21px] w-[104px]" /></>}</Line>
              <Line label="压力">{(id) => <><Box id={id} value="1" className="w-[105px]" /><Sel label="压力单位" value="atm" className="h-[21px] w-[104px]" /></>}</Line>
              <Line label="汽相分率">{(id) => <Box id={id} off className="w-[105px]" />}</Line>
              <Line label="总流量基准">{(id) => <Sel id={id} value="质量" look="italic" className="h-[21px] w-[105px]" />}</Line>
              <Line label="总流率">{(id) => <><Box id={id} className="w-[105px]" /><Sel label="流率单位" value="kg/hr" look="italic" className="h-[21px] w-[104px]" /></>}</Line>
              <Line label="溶剂" off>{(id) => <Sel id={id} look="off" className="h-[21px] w-[213px]" />}</Line>
            </fieldset>
            <fieldset className={fieldset + " mt-[10px] pb-px"}>
              <legend className={legend}>参考温度</legend>
              {["体积流量参考温度", "组分浓度参考温度"].map((t) => (
                <div key={t}>
                  <label htmlFor={ids + t} className="block h-6 leading-6">{t}</label>
                  <div className="flex h-6 items-start gap-[3px]">
                    <Box id={ids + t} off className="w-[60px]" />
                    <Sel label={t + "单位"} value="C" look="off" className="h-[21px] w-[90px]" />
                  </div>
                </div>
              ))}
            </fieldset>
          </div>
          <fieldset className="min-w-0 flex-1 rounded-l border border-r-0 border-[#6e90bd] pb-[5px] pl-[7px]">
            <legend className={legend}>组成</legend>
            <div className="flex gap-1 pt-0.5 pr-[3px]">
              <Sel label="组成基准" value="质量流量" className="h-5 w-[126px]" />
              <Sel label="组成单位" value="kg/hr" className="h-5 min-w-0 flex-1" />
            </div>
            <div className="mt-[11px] mr-[2px] h-[260px] border border-[#5b7fb0]">
              <table className="w-full table-fixed border-separate border-spacing-0">
                <colgroup><col className="w-6" /><col className="w-[106px]" /><col /></colgroup>
                <thead><tr className="h-[29px]"><Corner /><th className={headCell}>组分</th><th className={headCell}>值</th></tr></thead>
                <tbody>
                  {comps.map(([n, v], i) => (
                    <tr key={n} className={i % 2 ? "h-[25px] bg-[#edf6fc]" : "h-[25px] bg-white"}>
                      <RowHead />
                      <td className={cell + " pl-1 text-[#888]"}>{n}</td>
                      <td className={cell + " pr-3 text-right font-bold text-[#0000f0]"}>{v}</td>
                    </tr>
                  ))}
                </tbody>
              </table>
            </div>
            <div className="mt-[10px] flex h-[20px] items-center justify-end gap-[6px] pr-[9px]">
              <label htmlFor={ids + "sum"}>总计</label>
              <input id={ids + "sum"} readOnly value="100" className="h-[19px] w-[122px] bg-white px-1 text-right text-[#888] outline-none" />
            </div>
          </fieldset>
        </div>
        <div className="mt-auto -ml-1 flex shrink-0"><HBar a={12} b={528} c={88} /></div>
      </div>
    </>
  );
}

/* ---------- heater form ---------- */

function HeaterForm() {
  const rows: [string, string, string, boolean][] = [
    ["温度", "-189.5", "C", true], ["温度变化", "", "C", false], ["过热度", "", "C", false], ["过冷度", "", "C", false],
    ["压力", "1", "atm", true], ["负荷", "", "kW", false], ["汽相分率", "", "", false], ["压降关联式参数", "", "", false],
  ];
  return (
    <>
      <FormTabs className="pl-[12px]" tabs={[{ t: "规定", s: "on", check: true }, { t: "闪蒸选项" }, { t: "公用工程" }, { t: "注释" }]} />
      <div className="flex min-h-0 flex-1 pr-[6px] pb-[6px] pl-[15px]">
        <div className="min-h-0 min-w-0 flex-1 overflow-hidden pt-[10px]">
          <fieldset className={fieldset + " h-full w-[502px] rounded-b-none border-b-0"}>
            <legend className={legend}>闪蒸规范</legend>
            <Line label="闪蒸计算类型" w="w-[200px]">{(id) => <Sel id={id} value="温度" className="h-[21px] w-[228px]" />}</Line>
            <div className="mt-0.5 mb-[11px] flex h-6 items-center pl-[200px]"><Sel label="第二闪蒸变量" value="压力" className="h-[21px] w-[228px]" /></div>
            {rows.map(([l, v, u, on]) => (
              <Line key={l} label={l} off={!on} w="w-[200px]">
                {(id) => <><Box id={id} value={v} off={!on} className="w-[112px]" />{u && <Sel label={l + "单位"} value={u} look={on ? "blue" : "off"} className="h-[21px] w-[112px]" />}</>}
              </Line>
            ))}
          </fieldset>
        </div>
        <VBar a={4} b={199} c={60} className="mt-[3px]" />
      </div>
    </>
  );
}

/* ---------- stream results ---------- */

type R = { n: string; u?: string; a?: string; b?: string; k?: "+" | "-"; lvl?: 0 | 1 | 2; sel?: boolean; left?: boolean };
const results: R[] = [
  { n: "MIXED子流股", k: "-", lvl: 0 },
  { n: "相态", a: "汽相", left: true },
  { n: "温度", u: "C", a: "-189.4", b: "-189.5" },
  { n: "压力", u: "atm", a: "1", b: "1" },
  { n: "摩尔汽相分率", a: "1", b: "0.999454" },
  { n: "摩尔液相分率", a: "0", b: "0" },
  { n: "摩尔固相分率", a: "0", b: "0.000546144" },
  { n: "质量汽相分率", a: "1", b: "0.998057" },
  { n: "质量液相分率", a: "0", b: "0" },
  { n: "质量固相分率", a: "0", b: "0.00194256" },
  { n: "摩尔焓", u: "kJ/kmol", a: "-7733.87", b: "-7707.09" },
  { n: "质量焓", u: "J/kg", a: "-1.71469e+06", b: "-1.70875e+06" },
  { n: "摩尔熵", u: "kJ/kmol-K", a: "-18.0738", b: "-18.1104" },
  { n: "质量熵", u: "kJ/kg-K", a: "-4.00717", b: "-4.0153" },
  { n: "摩尔密度", u: "kmol/cum", a: "0.145693", b: "0.145946" },
  { n: "质量密度", u: "kg/cum", a: "0.657128", b: "0.658266" },
  { n: "焓流量", u: "kW", a: "-47.6303", b: "-47.4654" },
  { n: "平均分子量", a: "4.51036", b: "4.51036" },
  { n: "摩尔流量", u: "kmol/hr", a: "22.1712", b: "22.1712", k: "+" },
  { n: "摩尔分率", k: "+" },
  { n: "质量流量", u: "kg/hr", a: "100", b: "100", k: "+", sel: true },
  { n: "质量分率", k: "-" },
  { n: "C1", a: "0.15", b: "0.1481", lvl: 2 },
  { n: "HE", a: "0.85", b: "0.85", lvl: 2 },
  { n: "C1(S)", a: "0", b: "0.001943", lvl: 2 },
  { n: "体积流量", u: "cum/hr", a: "152.177", b: "151.914" },
  { n: "汽相", k: "+" },
  { n: "固相", k: "+" },
];

function Results() {
  return (
    <>
      <FormTabs
        className="pl-[7px]"
        infoClass="mr-[2px]"
        tabs={[{ t: "物料", s: "on" }, ...["热", "负荷", "功", "体积 % 曲线", "重量 % 曲线", "石油", "聚合物", "固体"].map((t): Tab => ({ t, s: "off" }))]}
      />
      <div className="flex min-h-0 flex-1 px-[3px] pt-1 pb-[6px]">
        <div className="flex min-h-0 min-w-0 flex-1 flex-col border border-[#5b7fb0]">
          <div className="flex min-h-0 flex-1">
            <div className="min-w-0 flex-1 overflow-hidden">
              <table className="w-full table-fixed border-separate border-spacing-0">
                <colgroup><col className="w-[26px]" /><col /><col className="w-[127px]" /><col className="w-[105px]" /><col className="w-[104px]" /><col className="w-7" /></colgroup>
                <thead>
                  <tr className="h-11">
                    <Corner />
                    <th aria-label="名称" className="border-r border-b border-[#cfd3d8] bg-white p-[2px]"><div className="h-[39px] bg-gradient-to-b from-[#fffad8] to-[#ffd400]" /></th>
                    <th className={headCell + " border-r-2 border-r-[#a8abaf]"}>单位</th>
                    <th className={headCell + " px-0.5 pb-0.5 align-bottom"}><Sel label="流股 1" value="S1" look="plain" className="h-[21px]" /></th>
                    <th className={headCell + " px-0.5 pb-0.5 align-bottom"}><Sel label="流股 2" value="S2" look="plain" className="h-[21px]" /></th>
                    <th aria-label="更多流股" className={headCell + " border-r-0 pb-0.5 pl-0.5 align-bottom"}><div className="h-[21px] border border-r-0 border-[#a4afbc] bg-white" /></th>
                  </tr>
                </thead>
                <tbody>
                  {results.map((r, i) => {
                    const lvl = r.lvl ?? 1;
                    const pad = lvl === 0 ? "pl-0.5" : lvl === 2 ? "pl-[58px]" : r.k ? "pl-[23px]" : "pl-[37px]";
                    return (
                      <tr key={i} className={(i % 4 === 1 ? "h-[27px] " : "h-[26px] ") + (i % 2 ? "bg-white " : "bg-[#edf6fc] ") + (r.k ? "font-bold" : "")}>
                        <RowHead on={r.sel} />
                        <td className={cell + " whitespace-nowrap " + pad + (r.sel ? " border-solid border-[#f0cf3c] bg-[#ffe888]" : "")}>
                          {r.k && (
                            <svg viewBox="0 0 9 9" className="mr-[5px] mb-0.5 inline size-[9px]" stroke="#000" strokeWidth="2" aria-hidden="true">
                              <path d={r.k === "+" ? "M4.500 0v9M0 4.500h9" : "M0 4.500h9"} />
                            </svg>
                          )}
                          {r.n}
                        </td>
                        <td className={cell + " border-r-2 border-r-[#a8abaf] pl-[5px] [border-right-style:solid]"}>{r.u}</td>
                        <td className={cell + (r.left ? " pl-1" : " pr-[11px] text-right")}>{r.a}</td>
                        <td className={cell + " pr-[12px] text-right"}>{r.b}</td>
                        <td className={cell + " border-r-0"} />
                      </tr>
                    );
                  })}
                </tbody>
              </table>
            </div>
            <VBar a={130} b={567} c={44} />
          </div>
          <div className="flex shrink-0 pr-[18px]"><HBar a={2} b={512} c={68} /></div>
        </div>
      </div>
    </>
  );
}

/* ---------- page ---------- */

export default function App() {
  return (
    <div className="flex h-screen flex-col overflow-hidden bg-[#c5d6ed] font-['Open_Sans','Noto_Sans_CJK_SC',sans-serif] text-xs leading-4 text-[#111]">
      <TitleArea />
      <RibbonBar />
      <main className="flex min-h-0 flex-1">
        <NavStrip />
        <div className="grid min-w-0 flex-1 grid-cols-[541fr_5px_679fr_8px_650fr_3px] grid-rows-1">
          <LeftColumn />
          <i />
          <div className="flex min-h-0 min-w-0 flex-col gap-[5px] pb-[26px]">
            <DocFrame title="S1 (MATERIAL)" grow={494}><StreamForm /></DocFrame>
            <DocFrame title="B1 (Heater)" bold grow={356}><HeaterForm /></DocFrame>
          </div>
          <i />
          <div className="flex min-h-0 min-w-0 flex-col pb-[26px]">
            <DocFrame title="结果摘要 - 流股 (全部)" grow={1}><Results /></DocFrame>
          </div>
        </div>
      </main>
      <footer className="flex h-6 shrink-0 items-center border-b border-black bg-[#afc1d9] pl-[3px] text-[#111]">
        <span className="mr-1.5">结果可供查询</span>
        <button type="button" className="h-[22px] w-[75px] rounded-sm border border-[#777] bg-gradient-to-b from-white to-[#dcdcdc]">检查状态</button>
        <div className="ml-auto flex items-center gap-1.5 pr-1 text-[#444]">
          <span className="mr-4">177%</span>
          <button type="button" aria-label="缩小"><svg viewBox="0 0 14 14" className="size-3.5" fill="none" stroke="#444" aria-hidden="true"><circle cx="7" cy="7" r="6.500" /><path d="M4 7h6" strokeWidth="1.500" /></svg></button>
          <input
            type="range"
            aria-label="缩放"
            defaultValue={52}
            className="mb-1 h-4 w-[120px] appearance-none bg-[linear-gradient(#f4f6f8,#f4f6f8)] bg-[length:100%_3px] bg-center bg-no-repeat [&::-webkit-slider-thumb]:h-4 [&::-webkit-slider-thumb]:w-[9px] [&::-webkit-slider-thumb]:appearance-none [&::-webkit-slider-thumb]:rounded-b-md [&::-webkit-slider-thumb]:border [&::-webkit-slider-thumb]:border-[#888] [&::-webkit-slider-thumb]:bg-[#f1f1f1]"
          />
          <button type="button" aria-label="放大"><svg viewBox="0 0 14 14" className="size-3.5" fill="none" stroke="#444" aria-hidden="true"><circle cx="7" cy="7" r="6.500" /><path d="M4 7h6M7 4v6" strokeWidth="1.500" /></svg></button>
          <button type="button" aria-label="适应窗口"><svg viewBox="0 0 14 14" className="size-3.5" fill="#f6f8fb" stroke="#5a7ba8" aria-hidden="true"><rect x=".5" y=".5" width="13" height="13" rx="1" /><path d="M2 5V2h3M9 2h3v3M12 9v3H9M5 12H2V9M5 7h4M7 5v4" fill="none" /></svg></button>
        </div>
      </footer>
    </div>
  );
}
